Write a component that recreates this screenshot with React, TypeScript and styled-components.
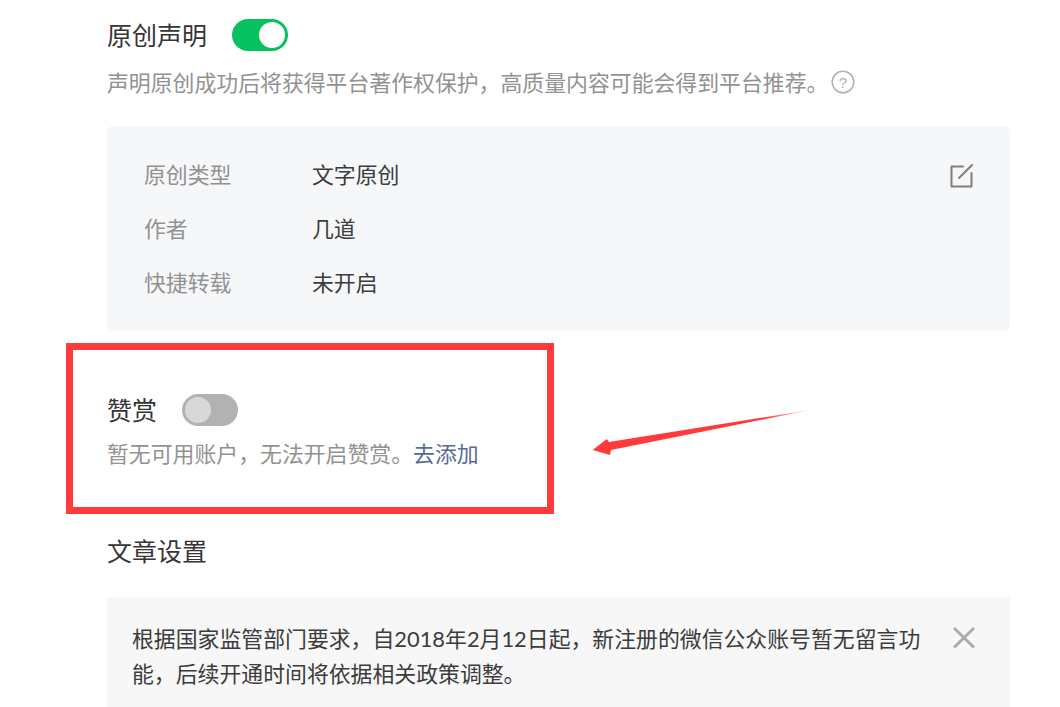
import React from "react";
import styled, { createGlobalStyle } from "styled-components";

const Global = createGlobalStyle`
  html, body { margin: 0; padding: 0; background: #fff; height: 707px; overflow: hidden; }
  * { box-sizing: border-box; }
`;
const FONT = `"Noto Sans CJK SC", "Noto Sans", sans-serif`;

const Page = styled.div`
  position: relative;
  width: 1060px;
  height: 707px;
  overflow: hidden;
  padding: 19px 50px 0 107px;
  font-family: ${FONT};
  color: #353535;
`;
const TitleRow = styled.div<{ $mt?: number }>`
  display: flex;
  align-items: center;
  height: 32px;
  margin-top: ${(p) => p.$mt ?? 0}px;
`;
const Title = styled.h2`
  margin: 0 25px 0 0;
  padding-bottom: 2px;
  font-size: 25px;
  font-weight: 400;
  line-height: 32px;
`;
const Toggle = styled.span<{ $on?: boolean }>`
  display: flex;
  justify-content: ${(p) => (p.$on ? "flex-end" : "flex-start")};
  align-items: center;
  width: 56px;
  height: 32px;
  padding: 3px;
  border-radius: 16px;
  background: ${(p) => (p.$on ? "#07c160" : "#b2b2b2")};
`;
const Knob = styled.span<{ $on?: boolean }>`
  width: 26px;
  height: 26px;
  border-radius: 50%;
  background: ${(p) => (p.$on ? "#ffffff" : "#d8d8d8")};
`;
const Desc = styled.p<{ $mt: number }>`
  display: flex;
  align-items: center;
  margin: ${(p) => p.$mt}px 0 0;
  font-size: 21.875px;
  line-height: 32px;
  color: #929292;
`;
const Help = styled.svg`
  margin-left: 3px;
`;
const AddLink = styled.a`
  color: #576b95;
  text-decoration: none;
`;
const InfoCard = styled.div`
  position: relative;
  margin-top: 28px;
  padding: 22px 37px;
  height: 205px;
  border-radius: 6px;
  background: #f6f7f9;
`;
const InfoRow = styled.div`
  display: flex;
  align-items: center;
  height: 54px;
  padding-bottom: 4px;
  font-size: 21.875px;
`;
const InfoLabel = styled.span`
  width: 168px;
  color: #929292;
`;
const InfoValue = styled.span`
  color: #3c3c3c;
`;
const EditIcon = styled.svg`
  position: absolute;
  top: 37px;
  right: 36px;
`;
const Notice = styled.div`
  display: flex;
  justify-content: space-between;
  align-items: flex-start;
  margin-top: 30px;
  padding: 24px 34px 20px 25px;
  height: 140px;
  background: #f7f7f7;
  font-family: "Lato", ${FONT};
  font-size: 21.875px;
  line-height: 35px;
  color: #3c3c3c;
`;
const NoticeText = styled.p`
  margin: 0;
  width: 795px;
`;
const Marker = styled.div`
  position: absolute;
  left: 66px;
  top: 343px;
  width: 488px;
  height: 171px;
  border: 7px solid #ff3a3a;
  pointer-events: none;
`;
const Arrow = styled.svg`
  position: absolute;
  left: 590px;
  top: 408px;
`;

export default function App() {
  return (
    <>
      <Global />
      <Page>
        <TitleRow>
          <Title>原创声明</Title>
          <Toggle $on><Knob $on /></Toggle>
        </TitleRow>
        <Desc $mt={15}>
          声明原创成功后将获得平台著作权保护，高质量内容可能会得到平台推荐。
          <Help width="24" height="24" viewBox="0 0 24 24" fill="none">
            <circle cx="12" cy="12" r="10.8" stroke="#b2b2b2" strokeWidth="1.5" />
            <text x="12" y="17.5" textAnchor="middle" fontSize="15" fill="#b2b2b2" fontFamily="Liberation Sans, sans-serif">?</text>
          </Help>
        </Desc>
        <InfoCard>
          <InfoRow><InfoLabel>原创类型</InfoLabel><InfoValue>文字原创</InfoValue></InfoRow>
          <InfoRow><InfoLabel>作者</InfoLabel><InfoValue>几道</InfoValue></InfoRow>
          <InfoRow><InfoLabel>快捷转载</InfoLabel><InfoValue>未开启</InfoValue></InfoRow>
          <EditIcon width="26" height="26" viewBox="0 0 26 26" fill="none" stroke="#7f7f7f" strokeWidth="2" strokeLinejoin="round" strokeLinecap="round">
            <path d="M15 3.5H3.5V23.5H23.5V10" />
            <path d="M11 15L24 2" />
          </EditIcon>
        </InfoCard>
        <TitleRow $mt={63}>
          <Title>赞赏</Title>
          <Toggle><Knob /></Toggle>
        </TitleRow>
        <Desc $mt={11}>
          <span>暂无可用账户，无法开启赞赏。<AddLink href="#">去添加</AddLink></span>
        </Desc>
        <TitleRow $mt={66}>
          <Title>文章设置</Title>
        </TitleRow>
        <Notice>
          <NoticeText>根据国家监管部门要求，自2018年2月12日起，新注册的微信公众账号暂无留言功能，后续开通时间将依据相关政策调整。</NoticeText>
          <svg width="24" height="32" viewBox="0 0 24 32" stroke="#ababab" strokeWidth="3" fill="none">
            <path d="M2 7L22 26.5M22 7L2 26.5" />
          </svg>
        </Notice>
        <Marker />
        <Arrow width="222" height="50" viewBox="0 0 222 50">
          <defs>
            <linearGradient id="arrowFade" x1="0" x2="1" y1="0" y2="0">
              <stop offset="0.8" stopColor="#ff3a3a" />
              <stop offset="1" stopColor="#ff3a3a" stopOpacity="0.25" />
            </linearGradient>
          </defs>
          <path d="M2.7 42L16.7 31L19 34L220 2L21 42L20 47Z" fill="url(#arrowFade)" />
        </Arrow>
      </Page>
    </>
  );
}
